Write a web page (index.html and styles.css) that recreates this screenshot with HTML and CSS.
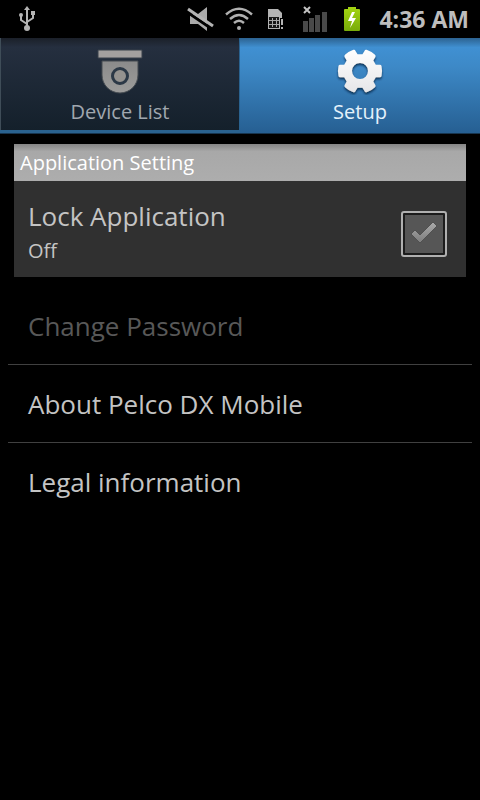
FILE: index.html
```html
<!DOCTYPE html>
<html lang="en">
<head>
<meta charset="utf-8">
<meta name="viewport" content="width=device-width, initial-scale=1">
<title>Setup</title>
<link rel="stylesheet" href="styles.css">
</head>
<body>
<header class="status">
  <svg class="usb" width="20" height="26" viewBox="0 0 20 26" fill="none" stroke="#b4b4b4" stroke-width="2" aria-hidden="true">
    <path d="M10 3V22M10 18L4 14V9M10 16L16 12V7"/>
    <path d="M10 0L13 4H7Z" fill="#b4b4b4" stroke="none"/>
    <circle cx="10" cy="22" r="3" fill="#b4b4b4" stroke="none"/>
    <circle cx="4" cy="9" r="2" fill="#b4b4b4" stroke="none"/>
    <path d="M14 5h4v4h-4z" fill="#b4b4b4" stroke="none"/>
  </svg>
  <div class="indicators">
    <svg width="28" height="26" viewBox="0 0 28 26" aria-hidden="true">
      <path d="M3 8h8l9-7v24l-9-7H3z" fill="#aaa"/>
      <path d="M0 6L25 23" stroke="#000" stroke-width="3"/>
      <path d="M1 3L26 20" stroke="#b4b4b4" stroke-width="3"/>
    </svg>
    <svg width="28" height="26" viewBox="0 0 28 26" fill="none" stroke="#b0b0b0" stroke-width="2.4" aria-hidden="true">
      <path d="M1 8.500Q14 -3 27 8.500M5 13Q14 5 23 13M9 17Q14 12.500 19 17"/>
      <circle cx="14" cy="22" r="2" fill="#b0b0b0" stroke="none"/>
    </svg>
    <svg class="sim" width="18" height="22" viewBox="0 0 18 22" aria-hidden="true">
      <path d="M1 1h10l4 4v5h-2v11H1z" fill="#b4b4b4"/>
      <path d="M2 9h10v11H2z" fill="#181818"/>
      <path d="M5.500 10v9M9.500 10v9M2 12.500h3M2 16.500h3M10 12.500h2M10 16.500h2M6 12.500h3M6 16.500h3" fill="none" stroke="#a8a8a8"/>
      <path d="M13 10h4v11h-4z" fill="#000"/>
      <path d="M14 11h2v6h-2zM14 19h2v2h-2z" fill="#b4b4b4"/>
    </svg>
    <svg class="signal" width="24" height="28" viewBox="0 0 24 28" aria-hidden="true">
      <path d="M0 16h5v11H0zM6 13h5v14H6zM12 10h5v17h-5zM19 7h5v20h-5z" fill="#494949"/>
      <path d="M1 2l6 6M7 2L1 8" stroke="#c4c4c4" stroke-width="2"/>
    </svg>
    <svg class="battery" width="18" height="26" viewBox="0 0 18 26" aria-hidden="true">
      <defs><linearGradient id="charge" x2="0" y2="1"><stop stop-color="#a5d512"/><stop offset="1" stop-color="#78ab0a"/></linearGradient></defs>
      <path d="M5 1h8v2h3q1 0 1 1v20q0 1-1 1H2q-1 0-1-1V4q0-1 1-1h3z" fill="url(#charge)"/>
      <path d="M9 6L5 15h4l-2 7 6-10H9l3-6z" fill="#fff"/>
    </svg>
    <time class="clock">4:36 AM</time>
  </div>
</header>

<nav class="tabs">
  <button class="tab" type="button">
    <svg width="48" height="46" viewBox="0 0 48 46" aria-hidden="true">
      <defs><linearGradient id="dome" x2="0" y2="1"><stop stop-color="#8b8b8b"/><stop offset="1" stop-color="#9c9c9b"/></linearGradient></defs>
      <path d="M2 1h44v8H2z" fill="#a3a09f" stroke="#39404a"/>
      <path d="M6 12h36v14a18 18 0 0 1-36 0z" fill="url(#dome)" stroke="#444a50"/>
      <circle cx="24" cy="27" r="7.500" fill="#94928f" stroke="#2b3846" stroke-width="3"/>
    </svg>
    <span>Device List</span>
  </button>
  <button class="tab active" type="button" aria-current="page">
    <svg width="48" height="46" viewBox="-24 -22 48 46" aria-hidden="true">
      <defs>
        <linearGradient id="metal" gradientUnits="userSpaceOnUse" x1="0" y1="-22" x2="0" y2="22"><stop stop-color="#fff"/><stop offset="1" stop-color="#e6e6e8"/></linearGradient>
        <filter id="shade" x="-20%" y="-20%" width="140%" height="140%"><feDropShadow dx="0" dy="2" stdDeviation="1.200" flood-color="#06233f" flood-opacity=".8"/></filter>
      </defs>
      <path filter="url(#shade)" fill="url(#metal)" fill-rule="evenodd" d="M15.800 6.200L19.500 6.300Q21.200 6.500 21.500 5Q22.600 0 21.500-5Q21.200-6.500 19.500-6.300L15.800-6.200L13.300-10.600L15.200-13.700Q16.200-15 15-16.200Q11.500-19.500 6.600-21.200Q5-21.700 4.500-20L2.500-16.800H-2.500L-4.500-20Q-5-21.700-6.600-21.200Q-11.500-19.500-15-16.200Q-16.200-15-15.200-13.700L-13.300-10.600L-15.800-6.200L-19.500-6.300Q-21.200-6.500-21.500-5Q-22.600 0-21.500 5Q-21.200 6.500-19.500 6.300L-15.800 6.200L-13.300 10.600L-15.200 13.700Q-16.200 15-15 16.200Q-11.500 19.500-6.600 21.200Q-5 21.700-4.500 20L-2.500 16.800H2.500L4.500 20Q5 21.700 6.600 21.200Q11.500 19.500 15 16.200Q16.200 15 15.200 13.700L13.300 10.600ZM8 0A8 8 0 1 0-8 0A8 8 0 1 0 8 0Z"/>
    </svg>
    <span>Setup</span>
  </button>
</nav>

<main>
  <section class="group">
    <h2>Application Setting</h2>
    <label class="lock">
      <span class="labels">
        <span class="name">Lock Application</span>
        <span class="state">Off</span>
      </span>
      <span class="check">
        <input type="checkbox">
        <svg width="28" height="24" viewBox="0 0 28 24" aria-hidden="true">
          <defs><linearGradient id="tick" x2="0" y2="1"><stop stop-color="#aaa"/><stop offset="1" stop-color="#7c7c7c"/></linearGradient></defs>
          <path d="M1 12L5 8L10 13L23 0L27 4L10 21Z" fill="url(#tick)" stroke="#505050"/>
        </svg>
      </span>
    </label>
  </section>
  <ul class="options">
    <li><button type="button" disabled>Change Password</button></li>
    <li><button type="button">About Pelco DX Mobile</button></li>
    <li><button type="button">Legal information</button></li>
  </ul>
</main>
</body>
</html>
```
FILE: styles.css
```css
* {
  box-sizing: border-box;
}

body {
  margin: 0;
  background: #000;
  color: #c4c4c4;
  font-family: "Open Sans", "Noto Sans", sans-serif;
}

button {
  border: 0;
  background: none;
  color: inherit;
  font-family: inherit;
}

.status {
  display: flex;
  align-items: center;
  justify-content: space-between;
  height: 38px;
  padding: 0 11px 0 17px;
}

.indicators {
  display: flex;
  align-items: center;
  gap: 10px;
}

.signal {
  margin: 0 6px 0 8px;
}

.sim {
  margin-left: 4px;
}

.clock {
  margin-left: 8px;
  color: #bdbdbd;
  font-size: 23px;
  font-weight: 700;
  line-height: 38px;
}

.tabs {
  display: grid;
  grid-template-columns: 1fr 1fr;
  height: 96px;
  border-bottom: 1px solid #17354f;
  background: #2a628f;
}

.tab {
  display: flex;
  flex-direction: column;
  align-items: center;
  gap: 4px;
  margin: 0 1px 3px 0;
  padding: 11px 0 0;
  border-left: 1px solid #3f4d58;
  background: linear-gradient(#1b2029, #252f3f 10%, #14202b);
  color: #a0a7af;
  font-size: 20px;
  line-height: 26px;
}

.active {
  margin: 0;
  border-left: 0;
  background: linear-gradient(#2c6290, #4090d2 10%, #3d89c7 30%, #265f92);
  color: #e5f2fb;
}

main {
  padding: 10px 8px;
}

.group {
  margin: 0 6px 10px;
  background: #303030;
}

h2 {
  margin: 0;
  padding: 0 6px;
  background: linear-gradient(#858585, #a8a8a8 20%, #adadad);
  color: #fff;
  font-size: 20px;
  font-weight: 400;
  line-height: 37px;
}

.lock {
  display: flex;
  align-items: center;
  justify-content: space-between;
  padding: 18px 19px 8px 14px;
}

.labels {
  display: flex;
  flex-direction: column;
}

.name {
  font-size: 26px;
  line-height: 34px;
}

.state {
  font-size: 20px;
  line-height: 36px;
}

.check {
  display: grid;
  place-items: center;
}

.check > * {
  grid-area: 1 / 1;
}

.check input {
  appearance: none;
  width: 46px;
  height: 46px;
  margin: 0;
  padding: 2px;
  border: 2px solid #b0b0b0;
  border-radius: 3px;
  background: linear-gradient(#565656, #565656) content-box, #1c1c1c;
}

.check svg {
  pointer-events: none;
}

.options {
  margin: 0;
  padding: 0;
  list-style: none;
}

.options li + li {
  border-top: 1px solid #404040;
}

.options button {
  display: block;
  width: 100%;
  padding: 2px 20px 0;
  font-size: 26px;
  line-height: 75px;
  text-align: left;
}

.options button:disabled {
  color: #585858;
}
```
